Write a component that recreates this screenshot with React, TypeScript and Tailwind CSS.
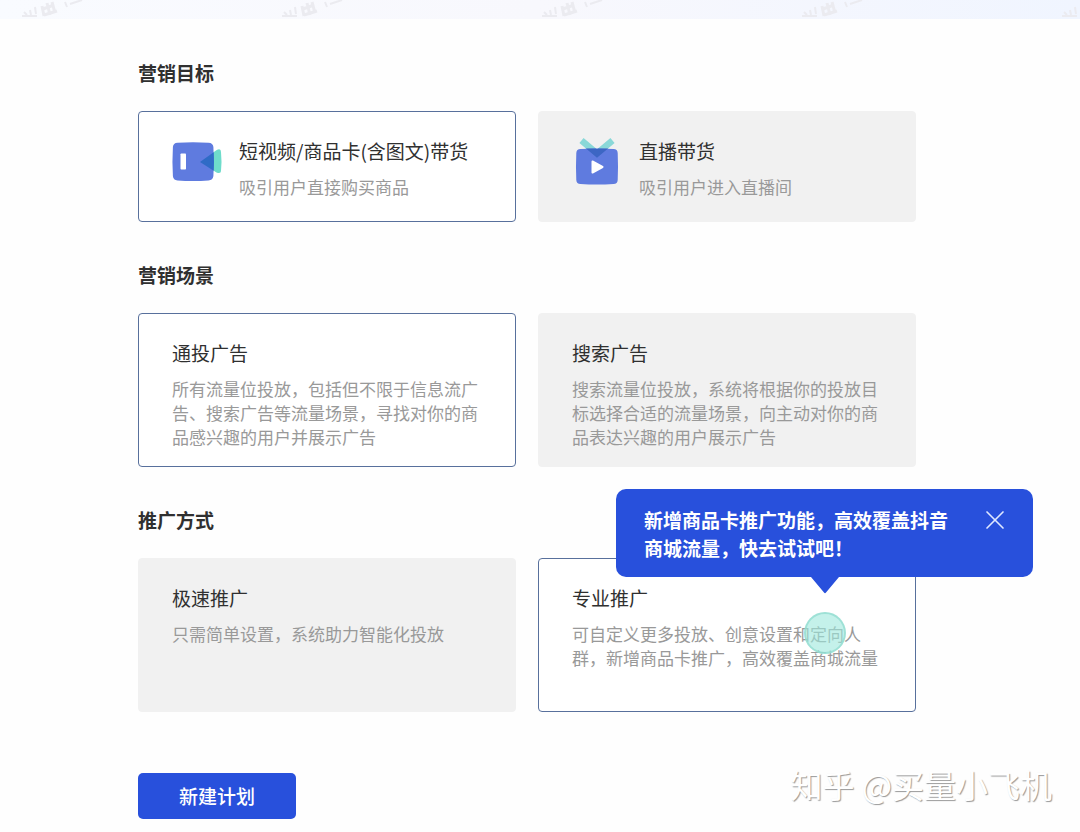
import React, { useState } from "react";
import { X } from "lucide-react";

interface Option {
  id: string;
  title: string;
  desc: string;
  icon?: React.ReactNode;
}

interface SectionProps {
  title: string;
  options: Option[];
  value: string;
  onChange: (id: string) => void;
  tall?: boolean;
  children?: React.ReactNode;
}

const VideoIcon = () => (
  <svg width="50" height="50" viewBox="0 0 50 50" fill="none" className="shrink-0" aria-hidden="true">
    <path d="M28 25 L44 13.500 Q49 10.500 49 15 Q50 24.500 49 34 Q49 37 44.500 35.500 Z" fill="#6fdccb" />
    <path d="M5.500 5.800 Q21 4.800 36.500 5.800 Q41 6 41.400 10 Q42.300 25 41.400 39 Q41 43.200 36.500 43.400 Q21 44.400 5.500 43.400 Q1.200 43.200 0.900 39 Q0 25 0.900 10 Q1.200 6 5.500 5.800 Z" fill="#5f7bdf" />
    <path d="M28 25 L41.700 15.200 Q42.200 25 41.700 33.800 Z" fill="#2f6bc6" />
    <rect x="8.500" y="16.500" width="5.500" height="16" rx="0.800" fill="#fff" />
  </svg>
);

const LiveIcon = () => (
  <svg width="50" height="50" viewBox="0 0 50 50" fill="none" className="shrink-0" aria-hidden="true">
    <defs>
      <clipPath id="tv-body">
        <rect x="4" y="11.500" width="42" height="36" rx="4" />
      </clipPath>
    </defs>
    <path d="M9.500 3.500 L25 16.500 L40.500 3.500" stroke="#8ad8d8" strokeWidth="6.500" />
    <path d="M8.500 12 Q25 11 41.500 12 Q45.500 12.200 45.700 16 Q46.300 29.500 45.700 43 Q45.500 46.800 41.500 47 Q25 48 8.500 47 Q4.500 46.800 4.300 43 Q3.700 29.500 4.300 16 Q4.500 12.200 8.500 12 Z" fill="#5f7bdf" />
    <path d="M9.500 3.500 L25 16.500 L40.500 3.500" stroke="#3c66c4" strokeWidth="6.500" clipPath="url(#tv-body)" />
    <path d="M20.500 24.500 L30.500 30 L20.500 35.500 Z" fill="#fff" stroke="#fff" strokeWidth="2" strokeLinejoin="round" />
  </svg>
);

const BannerMark = () => (
  <svg width="68" height="19" viewBox="0 0 68 19" fill="none" stroke="#ebebf0" strokeWidth="2" aria-hidden="true">
    <path d="M2 16 H17 M4 12 L7 15 M10 10 L11 15 M15 7 L16 14" />
    <path d="M22 6 L24 16 M27 3 L30 15 M32 2 L35 13 M23 9 L34 5 M24 15 L37 11" strokeWidth="3" />
    <path d="M45 2 L47 7 M50 4 L62 0" />
  </svg>
);

const goals: Option[] = [
  { id: "video", title: "短视频/商品卡(含图文)带货", desc: "吸引用户直接购买商品", icon: <VideoIcon /> },
  { id: "live", title: "直播带货", desc: "吸引用户进入直播间", icon: <LiveIcon /> },
];

const scenes: Option[] = [
  {
    id: "feed",
    title: "通投广告",
    desc: "所有流量位投放，包括但不限于信息流广告、搜索广告等流量场景，寻找对你的商品感兴趣的用户并展示广告",
  },
  {
    id: "search",
    title: "搜索广告",
    desc: "搜索流量位投放，系统将根据你的投放目标选择合适的流量场景，向主动对你的商品表达兴趣的用户展示广告",
  },
];

const modes: Option[] = [
  { id: "fast", title: "极速推广", desc: "只需简单设置，系统助力智能化投放" },
  {
    id: "pro",
    title: "专业推广",
    desc: "可自定义更多投放、创意设置和定向人群，新增商品卡推广，高效覆盖商城流量",
  },
];

const Section = ({ title, options, value, onChange, tall, children }: SectionProps) => (
  <section>
    <h2 className="mb-6 text-[19px] leading-7 font-bold text-[#303030]">{title}</h2>
    <div className="relative grid grid-cols-2 gap-[22px]">
      {options.map((o) => {
        const active = o.id === value;
        return (
          <button
            key={o.id}
            type="button"
            aria-pressed={active}
            onClick={() => onChange(o.id)}
            className={`flex items-start gap-[17px] rounded border px-[33px] pt-[25px] text-left ${
              tall ? "min-h-[154px] pb-4" : "min-h-[111px] pb-[22px]"
            } ${active ? "border-[#58709c] bg-white" : "border-[#f1f1f1] bg-[#f1f1f1]"}`}
          >
            {o.icon}
            <span className="block">
              <span className="block text-[19px] leading-7 text-[#303030]">{o.title}</span>
              <span className="mt-[10px] block text-[17px] leading-6 text-[#999999]">{o.desc}</span>
            </span>
          </button>
        );
      })}
      {children}
    </div>
  </section>
);

const GuideTip = ({ onClose }: { onClose: () => void }) => (
  <div className="absolute -top-[69px] -right-[117px] flex w-[417px] flex-col items-center">
    <div className="flex w-full items-start justify-between rounded-[10px] bg-[#2850dc] pt-[17px] pr-[22px] pb-[15px] pl-7">
      <p className="w-[312px] text-[19px] leading-7 font-bold text-white">
        新增商品卡推广功能，高效覆盖抖音商城流量，快去试试吧！
      </p>
      <button type="button" aria-label="关闭" onClick={onClose} className="flex h-7 items-center text-[#dfe8ff]">
        <X size={32} strokeWidth={1.25} />
      </button>
    </div>
    <svg width="28" height="17" viewBox="0 0 28 17" aria-hidden="true">
      <path d="M0 0 H28 L15 15.500 Q14 17 13 15.500 Z" fill="#2850dc" />
    </svg>
    <span className="mt-[18px] h-[42px] w-[42px] rounded-full border-2 border-[#8fdccf]/70 bg-[#9ce8dc]/60" />
  </div>
);

export default function App() {
  const [goal, setGoal] = useState("video");
  const [scene, setScene] = useState("feed");
  const [mode, setMode] = useState("pro");
  const [showTip, setShowTip] = useState(true);

  return (
    <div className="relative min-h-screen overflow-hidden bg-[#fefefe] font-['Noto_Sans_CJK_SC',sans-serif]">
      {/* Bottom edge of the page banner */}
      <div className="flex h-[19px] gap-48 overflow-hidden bg-linear-to-r from-[#f9fbff] via-[#f8f8fd] to-[#f0f5ff] pl-5">
        {[0, 1, 2, 3, 4].map((i) => (
          <span key={i} className="shrink-0">
            <BannerMark />
          </span>
        ))}
      </div>

      <main className="flex flex-col gap-[39px] pt-10 pr-[164px] pb-[13px] pl-[138px]">
        <Section title="营销目标" options={goals} value={goal} onChange={setGoal} />
        <Section title="营销场景" options={scenes} value={scene} onChange={setScene} tall />
        <Section title="推广方式" options={modes} value={mode} onChange={setMode} tall>
          {showTip && <GuideTip onClose={() => setShowTip(false)} />}
        </Section>

        <div className="pt-[22px]">
          <button type="button" className="h-[46px] w-[158px] rounded-[5px] bg-[#2850dc] text-[19px] leading-7 font-medium text-white">
            新建计划
          </button>
        </div>
      </main>

      <div className="pointer-events-none absolute right-7 bottom-7 text-[32px] leading-10 text-white [text-shadow:1px_1px_1px_#999999]">
        知乎 @买量小飞机
      </div>
    </div>
  );
}
